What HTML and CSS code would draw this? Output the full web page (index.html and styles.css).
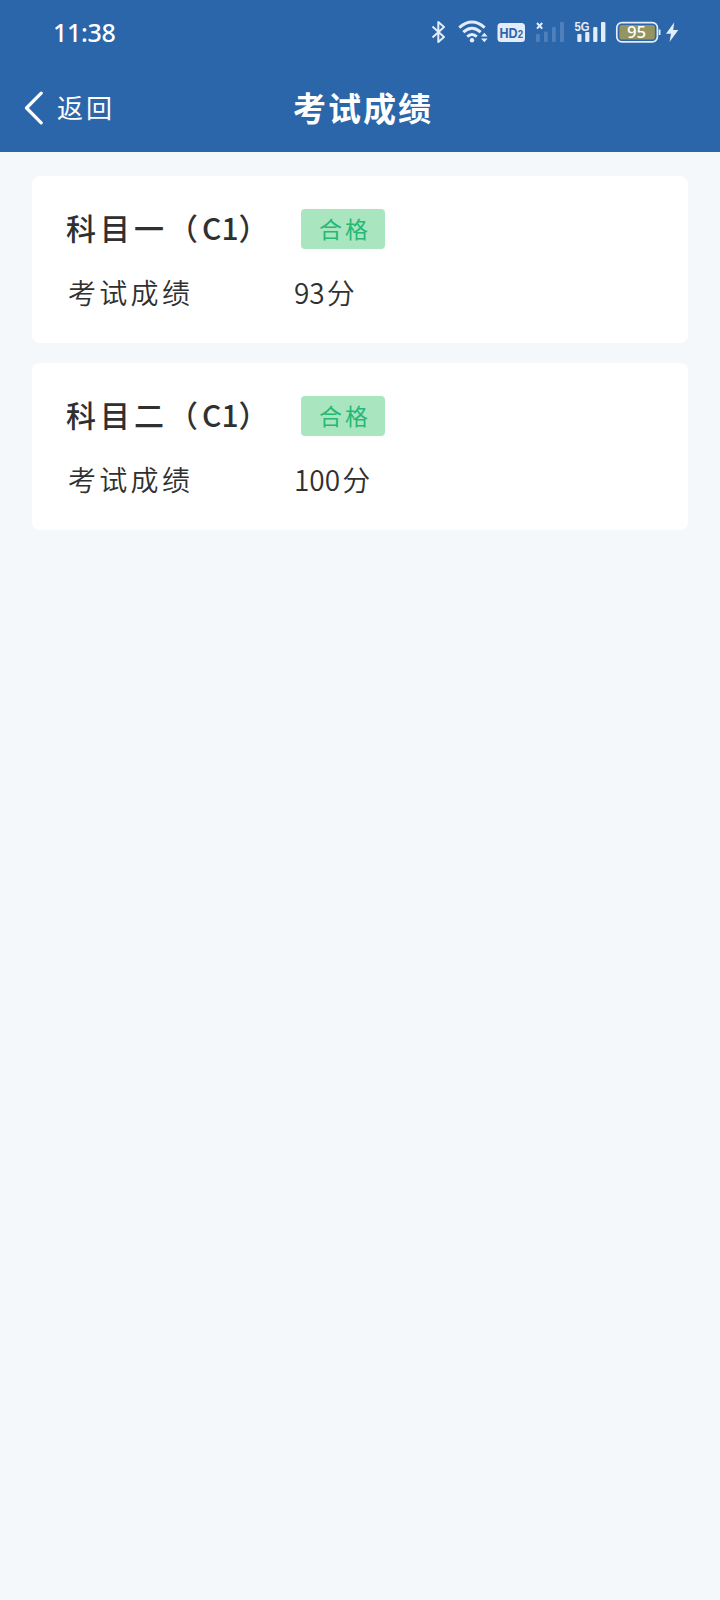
FILE: index.html
```html
<!DOCTYPE html>
<html lang="zh-CN">
<head>
  <meta charset="UTF-8" />
  <meta name="viewport" content="width=device-width, initial-scale=1.0" />
  <title>考试成绩</title>
  <link rel="stylesheet" href="styles.css">
</head>
<body>
  <header class="header">
    <div class="status-bar">
      <span class="time">11:38</span>
      <svg class="status-icons" width="252" height="28" viewBox="428 18 252 28">
        <!-- bluetooth -->
        <path d="M432.5 26.5 L444 37 L438.3 42 V22 L444 27 L432.5 37.5" fill="none" stroke="#e3edf9" stroke-width="2" stroke-linejoin="round" />
        <!-- wifi -->
        <g fill="none" stroke="#e3edf9" stroke-width="3">
          <path d="M459.3 27.6 Q472 16.5 484.7 27.6" />
          <path d="M463.3 32.2 Q472 24.2 480.7 32.2" />
          <path d="M467.2 36.6 Q472 32.4 476.8 36.6" />
        </g>
        <circle cx="472" cy="40.2" r="2.2" fill="#e3edf9" />
        <path d="M481 36.5 L484.3 32.8 L487.6 36.5 Z M481 38.5 L484.3 42.2 L487.6 38.5 Z" fill="#e3edf9" />
        <!-- HD -->
        <rect x="497.5" y="23" width="27.5" height="19" rx="3.5" fill="#e3edf9" />
        <text class="hd" x="499.6" y="38" textLength="23.4" lengthAdjust="spacingAndGlyphs">HD<tspan class="hd-sub">2</tspan></text>
        <!-- sim 1, no signal -->
        <path d="M537 23 L542.2 28.6 M542.2 23 L537 28.6" stroke="#e3edf9" stroke-width="2" />
        <g fill="#4f80bb">
          <rect x="536" y="34" width="3.8" height="8" rx="1" />
          <rect x="544" y="31.5" width="3.8" height="10.5" rx="1" />
          <rect x="552" y="27" width="3.8" height="15" rx="1" />
          <rect x="560" y="22" width="4" height="20" rx="1" />
        </g>
        <!-- sim 2 -->
        <text class="net" x="574.6" y="31" textLength="15" lengthAdjust="spacingAndGlyphs">5G</text>
        <g fill="#e3edf9">
          <rect x="577.3" y="34" width="4.2" height="8" rx="1" />
          <rect x="585.2" y="32" width="4.2" height="10" rx="1" />
          <rect x="593.2" y="27" width="4.2" height="15" rx="1" />
          <rect x="601" y="22" width="4.4" height="20" rx="1" />
        </g>
        <!-- battery -->
        <rect x="616.8" y="22.6" width="40.6" height="19.2" rx="5" fill="none" stroke="#e3edf9" stroke-width="1.7" />
        <rect x="619.3" y="25" width="35.6" height="14.4" rx="2.5" fill="#969460" />
        <path d="M659.6 29.5 V35" stroke="#e3edf9" stroke-width="1.8" />
        <text class="battery" x="627" y="37.8" textLength="19.2" lengthAdjust="spacingAndGlyphs">95</text>
        <path d="M674.3 22.3 L666 33.8 H671 L669.5 42 L678.3 30 H673.2 Z" fill="#e3edf9" />
      </svg>
    </div>
    <div class="nav-bar">
      <div class="back">
        <svg width="20" height="34" viewBox="0 0 20 34">
          <path d="M17.2 2.2 L2.5 17 L17.2 31.8" fill="none" stroke="#fff" stroke-width="3.2" stroke-linecap="round" stroke-linejoin="round" />
        </svg>
        <span>返回</span>
      </div>
      <h1 class="title">考试成绩</h1>
    </div>
  </header>

  <main class="list">
    <section class="card">
      <div class="row">
        <h2 class="subject">科目一（<span class="code">C1</span>）</h2>
        <span class="badge">合格</span>
      </div>
      <div class="row">
        <span class="label">考试成绩</span>
        <span class="score">93<span class="unit">分</span></span>
      </div>
    </section>

    <section class="card">
      <div class="row">
        <h2 class="subject">科目二（<span class="code">C1</span>）</h2>
        <span class="badge">合格</span>
      </div>
      <div class="row">
        <span class="label">考试成绩</span>
        <span class="score">100<span class="unit">分</span></span>
      </div>
    </section>
  </main>
</body>
</html>
```
FILE: styles.css
```css
* {
  box-sizing: border-box;
}
body {
  margin: 0;
  min-height: 1600px;
  background-color: #f4f8fa;
  color: #303030;
  font-family: "Noto Sans CJK SC", sans-serif;
}
.header {
  height: 152px;
  background-color: #2b65aa;
  color: #fff;
}
.status-bar {
  height: 64px;
  padding: 0 40px 0 53px;
  display: flex;
  align-items: center;
  justify-content: space-between;
}
.time {
  font-family: "Noto Sans", sans-serif;
  font-size: 25px;
  font-weight: 500;
  letter-spacing: -0.3px;
  line-height: 28px;
}
.hd, .net {
  font-family: "Liberation Sans", sans-serif;
  font-weight: bold;
}
.hd {
  font-size: 15px;
  fill: #2b65aa;
}
.hd-sub {
  font-size: 11.5px;
}
.net {
  font-size: 13.5px;
  fill: #e3edf9;
}
.battery {
  font-family: "Noto Sans", sans-serif;
  font-size: 16px;
  font-weight: 500;
  fill: #fff;
}
.nav-bar {
  height: 88px;
  padding: 0 24px 3px;
  display: grid;
  grid-template-columns: 1fr auto 1fr;
  align-items: center;
}
.back {
  padding-top: 3px;
  display: flex;
  align-items: center;
  gap: 13px;
  font-size: 26px;
  letter-spacing: 3px;
  line-height: 34px;
}
.back span {
  margin-top: -3px;
}
.title {
  margin: 0;
  padding-left: 6px;
  font-size: 33px;
  font-weight: 700;
  letter-spacing: 2px;
  line-height: 40px;
}
.list {
  padding: 24px 32px;
  display: flex;
  flex-direction: column;
  gap: 20px;
}
.card {
  height: 167px;
  padding: 33px 34px 0;
  display: flex;
  flex-direction: column;
  gap: 24px;
  border-radius: 8px;
  background-color: #fff;
}
.row {
  height: 40px;
  display: flex;
  align-items: center;
}
.subject {
  width: 235px;
  margin: 0;
  padding-bottom: 4px;
  font-size: 30px;
  font-weight: 500;
  letter-spacing: 4px;
  line-height: 36px;
  white-space: nowrap;
}
.code {
  letter-spacing: 0;
}
.badge {
  width: 84px;
  height: 40px;
  padding-left: 4px;
  border-radius: 4px;
  background-color: #a9e6c0;
  color: #27b877;
  font-size: 23px;
  letter-spacing: 3px;
  line-height: 38px;
  text-align: center;
}
.label {
  width: 228px;
  padding: 0 0 2px 2px;
  font-size: 28px;
  font-weight: 350;
  letter-spacing: 3.3px;
  line-height: 38px;
}
.score {
  padding-bottom: 2px;
  font-size: 28px;
  font-weight: 350;
  line-height: 38px;
}
.unit {
  margin-left: 2px;
}
```
